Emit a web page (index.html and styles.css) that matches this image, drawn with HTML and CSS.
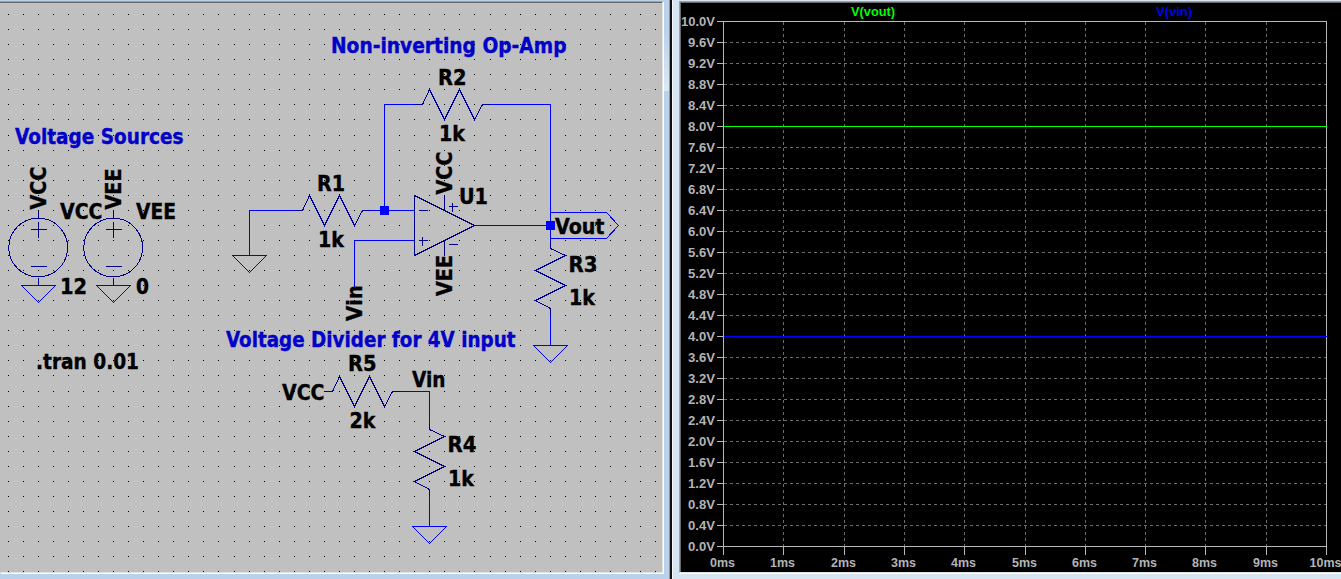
FILE: index.html
```html
<!DOCTYPE html>
<html lang="en">
<head>
<meta charset="utf-8">
<title>Non-inverting Op-Amp</title>
<link rel="stylesheet" href="styles.css">
</head>
<body>
<main class="workspace">
<section class="pane schematic-pane">
<svg class="schematic" viewBox="0 3 662 569" width="662" height="569">
  <defs>
    <path id="ground" d="M-17 0H17L0 17Z"/>
    <g id="source">
      <circle cx="-0.3" cy="37" r="29.4"/>
      <path d="M0 0V7M-8 19H8M0 11V27M-8 56H8M0 67V75"/>
    </g>
    <path id="res-h" d="M-8 0H0L7 -15L22 15L37 -15L52 15L60 0H67"/>
    <path id="res-v" d="M0 -7V0L15 7L-15 22L15 37L-15 52L0 60V67"/>
  </defs>
  <path id="dots" class="dots"/>
  <g class="lines" transform="translate(.5 .5)">
    <g class="wire">
      <path d="M249 255V210H294M369 210H414M384 210V104H414M489 104H550V242M414 240H354V287M474 225H550M550 315V345M399 391H429V423M429 496V526"/>
      <path d="M550 212H606L618 225L606 238H550"/>
      <use href="#ground" x="38" y="285"/>
      <use href="#ground" x="113" y="285"/>
      <use href="#ground" x="249" y="255"/>
      <use href="#ground" x="550" y="345"/>
      <use href="#ground" x="429" y="526"/>
    </g>
    <g class="symbol">
      <use href="#source" x="38" y="210"/>
      <use href="#source" x="113" y="210"/>
      <use href="#res-h" x="302" y="210"/>
      <use href="#res-h" x="422" y="104"/>
      <use href="#res-v" x="550" y="248"/>
      <use href="#res-v" x="429" y="429"/>
      <path d="M324 391H332L339 376L354 406L369 376L384 406L392 391H399"/>
      <path d="M414 195V255L474 225ZM418 210H427M418 240H427M422 236V245M444 195V210M448 206H457M452 202V211M444 240V255M448 244H457"/>
    </g>
  </g>
  <rect class="node" x="380" y="206" width="9" height="9"/>
  <rect class="node" x="546" y="221" width="9" height="9"/>
  <g class="title">
    <text x="331" y="53" textLength="235.5">Non-inverting Op-Amp</text>
    <text x="15" y="143.5" textLength="168.5">Voltage Sources</text>
    <text x="226" y="346.5" textLength="289.5">Voltage Divider for 4V input</text>
  </g>
  <g class="label">
    <text x="60" y="218.5" textLength="42.5">VCC</text>
    <text x="136" y="218.5" textLength="40">VEE</text>
    <text x="60" y="293.5" textLength="27">12</text>
    <text x="136" y="293.5" textLength="13">0</text>
    <text x="36" y="369" textLength="103">.tran 0.01</text>
    <text x="317" y="190.5" textLength="28">R1</text>
    <text x="318" y="246.5" textLength="26">1k</text>
    <text x="438" y="84.5" textLength="28.5">R2</text>
    <text x="439" y="140.5" textLength="26">1k</text>
    <text x="459" y="203.5" textLength="29">U1</text>
    <text x="555" y="233.5" textLength="49.5">Vout</text>
    <text x="568.5" y="271.5" textLength="29">R3</text>
    <text x="569" y="304.5" textLength="26">1k</text>
    <text x="348" y="370.5" textLength="28.5">R5</text>
    <text x="282" y="399.5" textLength="42.5">VCC</text>
    <text x="412" y="386.5" textLength="33.5">Vin</text>
    <text x="349.5" y="427.5" textLength="26">2k</text>
    <text x="447.5" y="451.5" textLength="29">R4</text>
    <text x="448" y="485.5" textLength="26">1k</text>
    <text transform="translate(46 209.5) rotate(-90)" textLength="43">VCC</text>
    <text transform="translate(121 209.5) rotate(-90)" textLength="41">VEE</text>
    <text transform="translate(362 321) rotate(-90)" textLength="36">Vin</text>
    <text transform="translate(452 194.5) rotate(-90)" textLength="43">VCC</text>
    <text transform="translate(452 296) rotate(-90)" textLength="41">VEE</text>
  </g>
</svg>
</section>
<div class="splitter"><div class="glow"></div></div>
<section class="pane plot-pane">
<svg class="plot" viewBox="681 3 660 569" width="660" height="569">
  <g id="axes" class="lines" transform="translate(.5 .5)">
    <path id="grid" class="grid"/>
    <path id="frame" class="frame"/>
    <path class="trace-vout" d="M723 126H1326"/>
    <path class="trace-vin" d="M723 336H1326"/>
  </g>
  <g id="ticks" class="tick"></g>
  <text class="legend vout" x="851" y="16" textLength="44">V(vout)</text>
  <text class="legend vin" x="1156" y="16" textLength="36">V(vin)</text>
</svg>
</section>
</main>
<script src="main.js"></script>
</body>
</html>
```
FILE: styles.css
```css
body {
  margin: 0;
  overflow: hidden;
  background: #b9d1ea;
}
.workspace {
  display: flex;
  width: 1341px;
  height: 579px;
}
.pane {
  box-sizing: border-box;
  flex: none;
}
.schematic-pane {
  width: 664px;
  padding-top: 1px;
  background: #b9d1ea;
}
.schematic {
  display: block;
  box-sizing: border-box;
  width: 663px;
  height: 572px;
  padding-top: 1px;
  border-top: 1px solid #a0a0a0;
  border-right: 1px solid #e3e3e3;
  border-bottom: 1px solid #e3e3e3;
  background: linear-gradient(#696969 1px, #c0c0c0 1px);
  box-shadow: 1px 1px 0 #fff;
}
.splitter {
  flex: none;
  box-sizing: border-box;
  width: 8px;
  padding-top: 30px;
  border-right: 2px solid #101010;
  background: linear-gradient(90deg, #b9d1ea 5px, #35b8dc 5px);
}
.glow {
  width: 5px;
  height: 61px;
  background: linear-gradient(#b9d1ea, #dce8f5);
}
.plot-pane {
  width: 669px;
  padding: 1px 0 0 6px;
  border-left: 1px solid #f4f8fc;
  background: #d7e4f2;
}
.plot {
  display: block;
  box-sizing: border-box;
  width: 662px;
  height: 572px;
  padding: 1px 0 0 1px;
  border-top: 1px solid #a0a0a0;
  border-left: 1px solid #a0a0a0;
  border-bottom: 1px solid #e3e3e3;
  background: linear-gradient(90deg, #696969 1px, transparent 1px), linear-gradient(#696969 1px, #000 1px);
  box-shadow: 0 1px 0 #fff;
}
.lines {
  fill: none;
  stroke-width: 1;
  shape-rendering: crispEdges;
}
.dots {
  stroke: #000;
  stroke-width: 1;
  shape-rendering: crispEdges;
}
.wire { stroke: #0000ff; }
.symbol { stroke: #000090; }
.node { fill: #0000ff; }
.title, .label {
  font: bold 20.5px "DejaVu Sans Condensed", "DejaVu Sans", sans-serif;
  font-stretch: condensed;
  stroke-width: 0.35;
}
.title { fill: #0000c8; stroke: #0000c8; }
.label { fill: #000; stroke: #000; }
.grid {
  stroke: #6c6c6c;
  stroke-dasharray: 3 3;
}
.frame { stroke: #b8b8b8; }
.trace-vout { stroke: #00ff00; }
.trace-vin { stroke: #0000ff; }
.tick, .legend {
  font: bold 13px "Liberation Sans", Arial, sans-serif;
}
.tick { fill: #b4b4b4; }
.vout { fill: #00ff00; }
.vin { fill: #0000f0; }
```
FILE: main.js
```js
const byId = (id) => document.getElementById(id);

// Snap grid of the schematic sheet
let dots = '';
for (let row = 0; row < 38; row++) {
  for (let col = 0; col < 44; col++) {
    const x = Math.floor(8.1 + 15.06 * col);
    const y = Math.floor(14.52 + 15.06 * row);
    dots += `M${x} ${y + 0.5}h1`;
  }
}
byId('dots').setAttribute('d', dots);

// Plot axes: 0-10 V in 0.4 V steps, 0-10 ms in 1 ms steps
let grid = '';
let frame = 'M723 21H1326V546H723Z';
const addTick = (x, y, label, anchor, width) => {
  const t = document.createElementNS('http://www.w3.org/2000/svg', 'text');
  t.setAttribute('x', x);
  t.setAttribute('y', y);
  t.setAttribute('text-anchor', anchor);
  t.setAttribute('textLength', width);
  t.textContent = label;
  byId('ticks').append(t);
};
for (let i = 0; i <= 25; i++) {
  const y = 21 + 21 * i;
  frame += `M716 ${y}H723`;
  if (i > 0 && i < 25) grid += `M723.5 ${y}H1326`;
  addTick(715, y + 4.5, (10 - 0.4 * i).toFixed(1) + 'V', 'end', i ? 27 : 34);
}
for (let i = 0; i <= 10; i++) {
  const x = Math.round(723 + 60.3 * i);
  frame += `M${x} 546V554`;
  if (i > 0 && i < 10) grid += `M${x} 21.5V546`;
  addTick(x - 0.5, 566.5, i + 'ms', 'middle', i < 10 ? 25 : 32);
}
byId('grid').setAttribute('d', grid);
byId('frame').setAttribute('d', frame);
document.querySelectorAll('text').forEach((t) => t.setAttribute('lengthAdjust', 'spacingAndGlyphs'));
```
